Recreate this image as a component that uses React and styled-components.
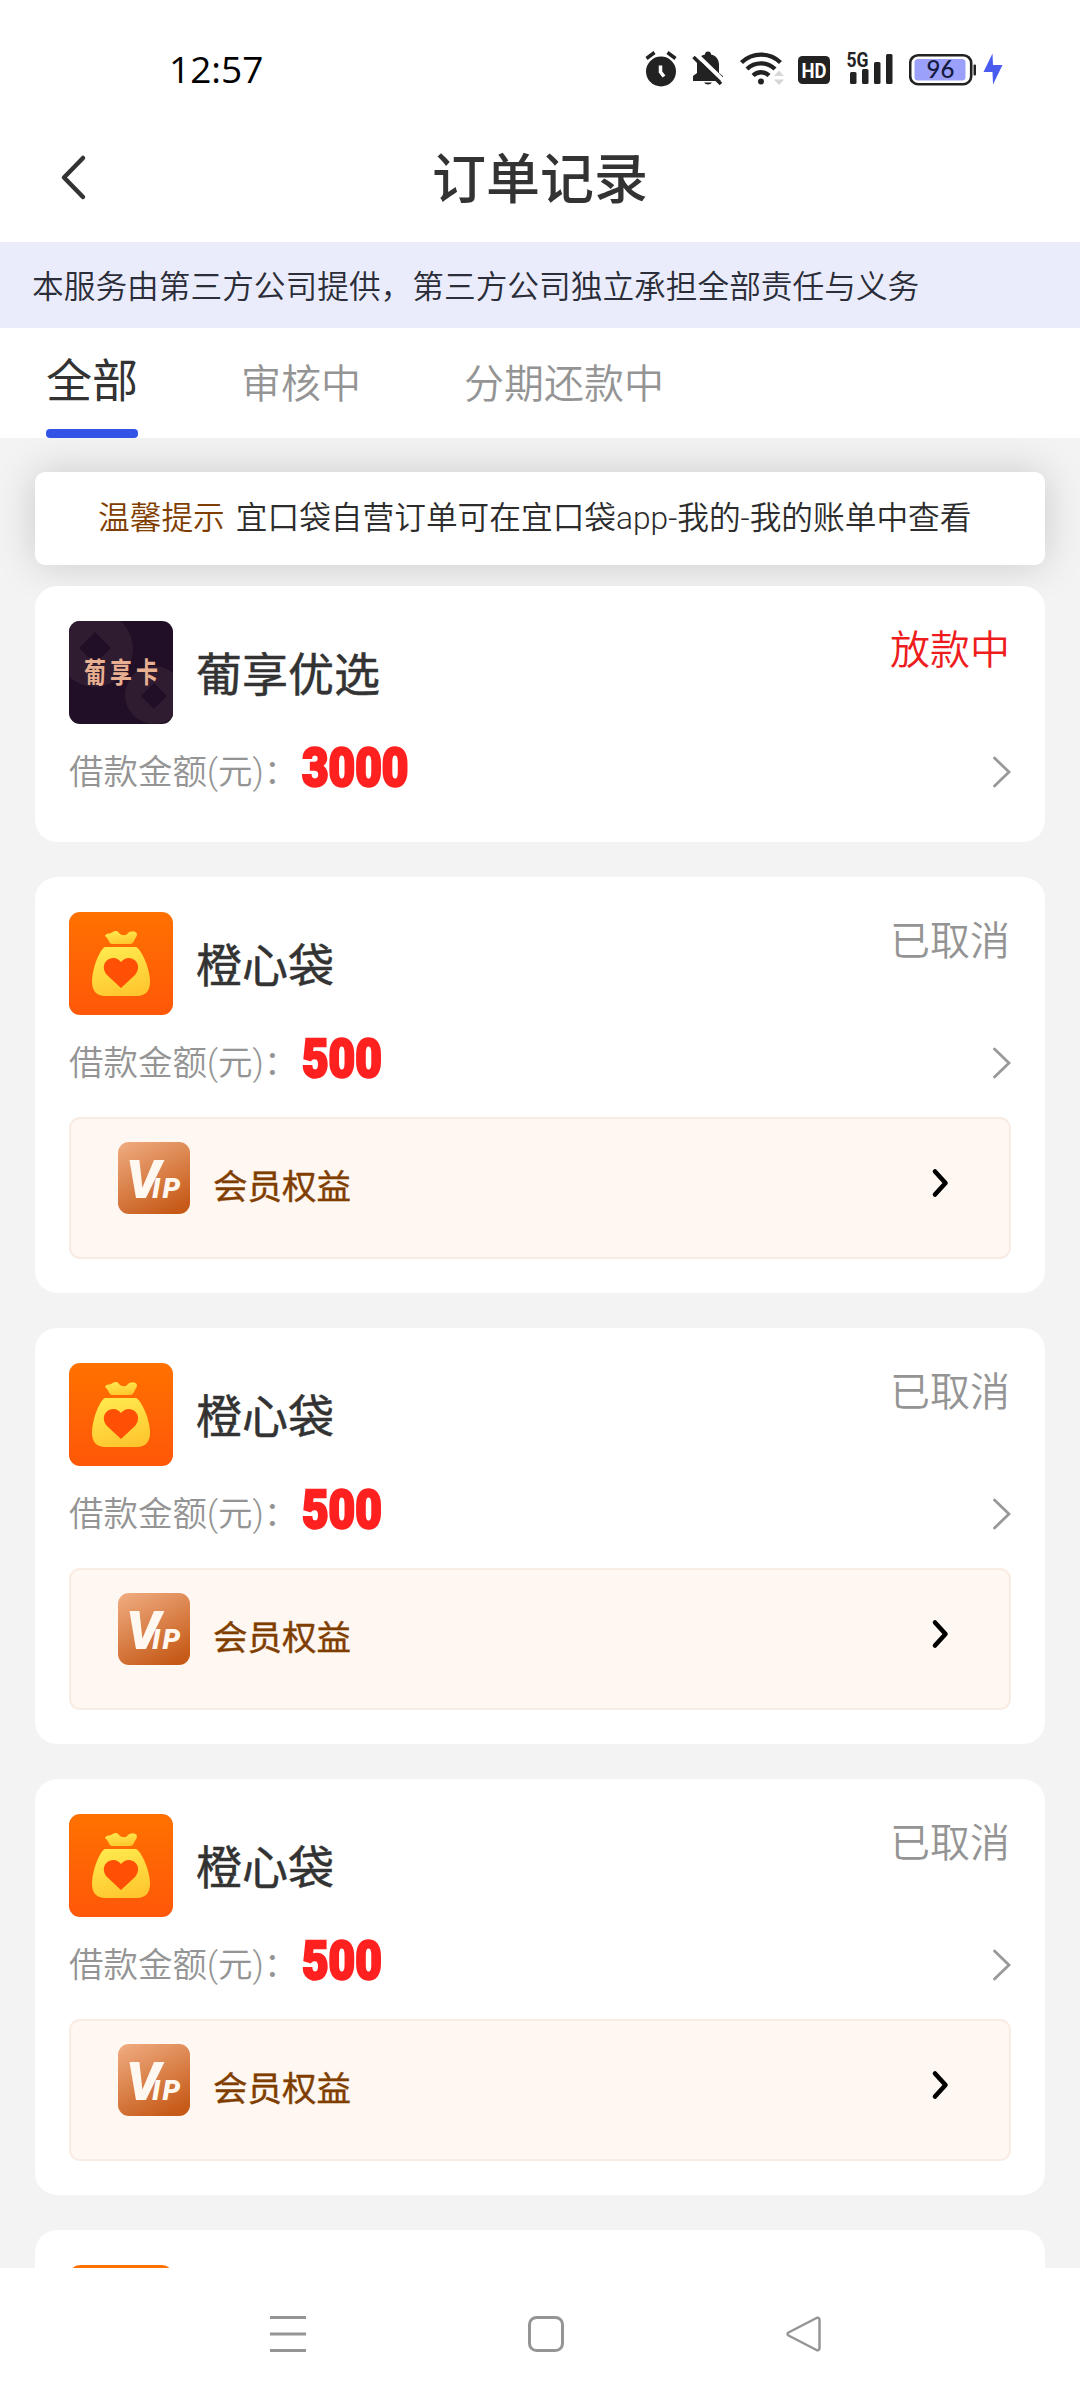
import React from "react";
import styled, { createGlobalStyle, css } from "styled-components";

const GlobalStyle = createGlobalStyle`
  * {
    box-sizing: border-box;
  }
  body {
    margin: 0;
    background: #fff;
    font-family: Roboto, "Noto Sans CJK SC", sans-serif;
    color: #333;
  }
`;

const flex = (direction = "row", align = "center", justify = "flex-start") => css`
  display: flex;
  flex-direction: ${direction};
  align-items: ${align};
  justify-content: ${justify};
`;

const Screen = styled.div`
  ${flex("column", "stretch")};
  width: 1080px;
  height: 2400px;
  overflow: hidden;
`;

const StatusBar = styled.header`
  ${flex("row", "center", "space-between")};
  height: 114px;
  padding: 24px 76px 0 169px;
`;

const Clock = styled.time`
  font: 500 37px/40px "Open Sans", sans-serif;
  color: #000;
`;

const StatusIcons = styled.div`
  ${flex()};
  svg {
    display: block;
  }
`;

const StatusSlot = styled.span`
  width: ${(props) => props.$width}px;
`;

const TitleBar = styled.div`
  display: grid;
  grid-template-columns: 200px 1fr 200px;
  align-items: center;
  height: 128px;
`;

const BackButton = styled.button`
  width: 60px;
  height: 60px;
  margin: 0 0 3px 44px;
  padding: 0;
  border: 0;
  background: none;
`;

const Title = styled.h1`
  margin: 0;
  padding-top: 6px;
  text-align: center;
  font-size: 54px;
  line-height: 64px;
  font-weight: 500;
`;

const Disclaimer = styled.p`
  margin: 0;
  height: 86px;
  padding: 0 32px;
  background: #eaecfb;
  font-size: 31.7px;
  line-height: 91px;
  font-weight: 350;
  color: #2b2d38;
`;

const Tabs = styled.nav`
  ${flex("row", "stretch")};
  gap: 103px;
  height: 110px;
  padding: 0 46px;
`;

const Tab = styled.span`
  ${flex("column", "center", "space-between")};
  font-size: ${(props) => (props.$active ? 46 : 40)}px;
  line-height: 101px;
  padding-top: ${(props) => (props.$active ? 3 : 6)}px;
  font-weight: ${(props) => (props.$active ? 400 : 350)};
  color: ${(props) => (props.$active ? "#333" : "#949494")};
  &::after {
    content: "";
    flex: none;
    width: 100%;
    height: 9px;
    margin-top: -3px;
    border-radius: 4px;
    background: ${(props) => (props.$active ? "#3253e6" : "transparent")};
  }
`;

const Content = styled.main`
  ${flex("column", "stretch")};
  height: 1830px;
  padding: 34px 35px 0;
  background: #f3f3f3;
  overflow: hidden;
`;

const Tip = styled.p`
  flex: none;
  margin: 0 0 21px;
  height: 93px;
  padding-left: 63px;
  border-radius: 10px;
  background: #fff;
  box-shadow: 0 0 40px rgba(0, 0, 0, 0.17);
  font-size: 31.7px;
  line-height: 93px;
  font-weight: 350;
  color: #2c2c2c;
  white-space: nowrap;
`;

const TipLabel = styled.span`
  margin-right: 11px;
  color: #7f3e00;
`;

const OrderList = styled.div`
  ${flex("column", "stretch")};
  flex: none;
  gap: 35px;
  position: relative;
`;

const Card = styled.article`
  padding: 35px 34px 26px;
  border-radius: 22px;
  background: #fff;
`;

const CardHead = styled.div`
  ${flex("row", "flex-start")};
  height: 103px;
`;

const Logo = styled.svg`
  display: block;
  width: 104px;
  height: 103px;
  border-radius: 11px;
`;

const Name = styled.h2`
  flex: 1;
  margin: 0 0 0 23px;
  font-size: 46px;
  line-height: 109px;
  font-weight: 400;
  -webkit-text-stroke: 0.5px #333;
`;

const Status = styled.span`
  margin-right: 1px;
  font-size: 40px;
  line-height: 59px;
  font-weight: 350;
  color: ${(props) => (props.$active ? "#ee1c1c" : "#949494")};
`;

const AmountRow = styled.div`
  ${flex("row", "center", "space-between")};
  height: 84px;
  margin-top: 8px;
  padding-bottom: 4px;
  font-size: 34.5px;
  font-weight: 350;
  color: #949494;
`;

const AmountLabel = styled.span`
  ${flex()};
  line-height: 80px;
`;

const Amount = styled.strong`
  margin: -9px 0 0 4px;
  transform: scaleX(0.85);
  transform-origin: left;
  font-size: 54px;
  font-weight: 900;
  color: #ff2020;
  -webkit-text-stroke: 2.5px #ff2020;
`;

const Benefits = styled.div`
  ${flex("row", "flex-start")};
  height: 142px;
  margin: 10px 0 8px;
  padding: 23px 60px 0 47px;
  border: 2px solid #f8ece4;
  border-radius: 11px;
  background: #fff7f1;
`;

const VipBadge = styled.svg`
  display: block;
  width: 72px;
  height: 72px;
  border-radius: 11px;
`;

const BenefitsText = styled.span`
  flex: 1;
  margin-left: 23px;
  font-size: 34.5px;
  line-height: 90px;
  color: #7f3e00;
  -webkit-text-stroke: 0.4px #7f3e00;
`;

const BenefitsArrow = styled.span`
  ${flex()};
  height: 82px;
`;

const SystemNav = styled.footer`
  ${flex("row", "center", "center")};
  gap: 218px;
  height: 132px;
  padding-left: 12px;
  background: #fff;
`;

const AlarmIcon = () => (
  <svg width="32" height="36" viewBox="0 0 32 36">
    <circle cx="16" cy="20.5" r="15" fill="#222" />
    <path d="M1.500 7.500 9.500 1.500M30.500 7.500 22.500 1.500" stroke="#222" strokeWidth="3.500" />
    <path d="M15.500 14.500v6.500l3.500 4.500" fill="none" stroke="#fff" strokeWidth="3.500" />
  </svg>
);

const MutedIcon = () => (
  <svg width="32" height="36" viewBox="0 0 32 36">
    <path
      fill="#222"
      d="M13 3.500a3 3 0 0 1 6 0c5 1 8 5 8 10v8.500l4 3v5H1v-5l4-3v-8.500c0-5 3-9 8-10z"
    />
    <path d="M12 31.500h8a4.500 3.500 0 0 1-8 0z" fill="#222" />
    <path d="M4 3 33 31" stroke="#fff" strokeWidth="4" />
    <path d="M1 4 8 11" stroke="#fff" strokeWidth="3" />
    <path d="M1.500 6 29 33" stroke="#222" strokeWidth="3.500" />
  </svg>
);

const WifiIcon = () => (
  <svg width="46" height="36" viewBox="0 0 46 36">
    <g fill="none" stroke="#222" strokeWidth="4.300">
      <path d="M1.500 11.500a28 28 0 0 1 39 0" />
      <path d="M7 18a20 20 0 0 1 28 0" />
      <path d="M13 24.500a11.500 11.500 0 0 1 16 0" />
    </g>
    <circle cx="21" cy="30.500" r="3" fill="#222" />
    <path d="M34 25l5-5.500 5 5.500zM34 28.500l5 5.500 5-5.500z" fill="#d6d6d6" />
  </svg>
);

const HdIcon = () => (
  <svg width="34" height="36" viewBox="0 0 34 36">
    <rect x="1" y="5" width="32" height="28" rx="4.500" fill="#222" />
    <text
      x="17"
      y="26.500"
      fill="#fff"
      fontSize="21"
      fontWeight="700"
      fontFamily="Roboto"
      textAnchor="middle"
      textLength="25"
      lengthAdjust="spacingAndGlyphs"
    >
      HD
    </text>
  </svg>
);

const SignalIcon = () => (
  <svg width="48" height="36" viewBox="0 0 48 36" overflow="visible">
    <g fill="#222">
      <rect x="4" y="21" width="6.500" height="12" rx="1.500" />
      <rect x="16" y="18" width="6.500" height="15" rx="1.500" />
      <rect x="28" y="11" width="6.500" height="22" rx="1.500" />
      <rect x="40" y="3" width="6.500" height="30" rx="1.500" />
      <text
        x="0.500"
        y="16"
        fontSize="20"
        fontWeight="700"
        fontFamily="Roboto"
        textLength="22"
        lengthAdjust="spacingAndGlyphs"
      >
        5G
      </text>
    </g>
  </svg>
);

const BatteryIcon = () => (
  <svg width="68" height="36" viewBox="0 0 68 36">
    <rect x="1.200" y="4.200" width="61" height="29" rx="8" fill="#fff" stroke="#222" strokeWidth="2.600" />
    <rect x="5.500" y="8" width="51" height="21.500" rx="3.500" fill="#9ba0fa" />
    <rect x="64.500" y="13.500" width="2.500" height="11" rx="1" fill="#222" />
    <text x="31.500" y="27" fontSize="24" fontFamily="Lato" fontWeight="500" textAnchor="middle" fill="#141a40">
      96
    </text>
  </svg>
);

const BoltIcon = () => (
  <svg width="22" height="36" viewBox="0 0 22 36">
    <path d="M10.500 2.500 1.500 21h9l.5 12.500L20.500 14h-9.500z" fill="#4a5cf0" />
  </svg>
);

const BackIcon = () => (
  <svg width="60" height="60" viewBox="0 0 60 60">
    <path
      d="M39 11 20 30.500 39 50"
      fill="none"
      stroke="#333"
      strokeWidth="4.500"
      strokeLinecap="round"
      strokeLinejoin="round"
    />
  </svg>
);

const DetailArrow = () => (
  <svg width="18" height="32" viewBox="0 0 18 32">
    <path d="M1.500 2 16 16 1.500 30" fill="none" stroke="#999" strokeWidth="2.800" strokeLinecap="round" />
  </svg>
);

const BoldArrow = () => (
  <svg width="18" height="30" viewBox="0 0 18 30">
    <path
      d="M4 3.500 14.500 15 4 26.500"
      fill="none"
      stroke="#000"
      strokeWidth="4.600"
      strokeLinecap="round"
      strokeLinejoin="round"
    />
  </svg>
);

const GrapeLogo = () => (
  <Logo viewBox="0 0 104 103">
    <rect width="104" height="103" fill="#200f26" />
    <circle cx="26" cy="28" r="38" fill="#2f1c31" />
    <path d="M26 11 42 27 26 43 10 27z" fill="#200f26" />
    <circle cx="85" cy="74" r="29" fill="#2f1c31" />
    <path d="M85 62 98 75 85 88 72 75z" fill="#200f26" />
    <text
      transform="scale(1 1.3)"
      x="15 41 67"
      y="48"
      fill="#e8b090"
      fontFamily="Noto Sans CJK SC"
      fontWeight="700"
      fontSize="22"
    >
      葡享卡
    </text>
  </Logo>
);

const BagLogo = () => (
  <Logo viewBox="0 0 104 103">
    <defs>
      <linearGradient id="bagBg" x1="0" y1="0" x2="0" y2="1">
        <stop offset="0" stopColor="#ff7100" />
        <stop offset="1" stopColor="#ff5709" />
      </linearGradient>
      <linearGradient id="bagFill" x1="0.300" y1="0" x2="0.600" y2="1">
        <stop offset="0" stopColor="#ffe94d" />
        <stop offset="1" stopColor="#ffc62e" />
      </linearGradient>
    </defs>
    <rect width="104" height="103" fill="url(#bagBg)" />
    <path
      d="M36 24c1-3 4-2 6-3 3-2 6-3 8 0 3 3 7 3 9 0 2-2 8-3 9 1 0 3-2 4-3 7-1 2-2 3-4 3H43c-3 0-3-5-7-8z"
      fill="url(#bagFill)"
    />
    <path
      d="M36 35h31c5 2 14 21 14 35 0 9-5 14-13 14H36c-8 0-13-5-13-14 0-14 8-33 13-35z"
      fill="url(#bagFill)"
    />
    <path
      d="M52 76 38 63c-6-7-3-16 6-17 4 0 6 2 8 4 2-2 4-4 8-4 9 1 12 10 6 17z"
      fill="#ff5005"
    />
  </Logo>
);

const VipIcon = () => (
  <VipBadge viewBox="0 0 72 72">
    <defs>
      <linearGradient id="vipBg" x1="0.200" y1="0" x2="0.700" y2="1">
        <stop offset="0" stopColor="#eda77a" />
        <stop offset="1" stopColor="#c65a18" />
      </linearGradient>
    </defs>
    <rect width="72" height="72" fill="url(#vipBg)" />
    <text x="8" y="56" fill="#fff8f0" fontFamily="Roboto" fontWeight="900" fontStyle="italic" fontSize="54">
      V
      <tspan x="34 44.500" fontSize="28">
        IP
      </tspan>
    </text>
  </VipBadge>
);

const MenuIcon = () => (
  <svg width="40" height="40" viewBox="0 0 40 40">
    <path d="M2 3.500h36M2 20h36M2 36.500h36" stroke="#959595" strokeWidth="3" />
  </svg>
);

const HomeIcon = () => (
  <svg width="40" height="40" viewBox="0 0 40 40">
    <rect x="3.500" y="3.500" width="33" height="33" rx="7" fill="none" stroke="#959595" strokeWidth="3" />
  </svg>
);

const ReturnIcon = () => (
  <svg width="40" height="40" viewBox="0 0 40 40">
    <path
      d="M32.500 4 4.500 18.500q-2 1.500 0 3L32.500 36q3 1 3-2V6q0-3-3-2z"
      fill="none"
      stroke="#959595"
      strokeWidth="2.500"
      strokeLinejoin="round"
    />
  </svg>
);

const orders = [
  { id: 1, name: "葡享优选", status: "放款中", amount: 3000, active: true, logo: GrapeLogo },
  { id: 2, name: "橙心袋", status: "已取消", amount: 500, benefits: true, logo: BagLogo },
  { id: 3, name: "橙心袋", status: "已取消", amount: 500, benefits: true, logo: BagLogo },
  { id: 4, name: "橙心袋", status: "已取消", amount: 500, benefits: true, logo: BagLogo },
];

const tabs = ["全部", "审核中", "分期还款中"];

const Order = ({ name, status, amount, active, benefits, logo: OrderLogo }) => (
  <Card>
    <CardHead>
      <OrderLogo />
      <Name>{name}</Name>
      <Status $active={active}>{status}</Status>
    </CardHead>
    <AmountRow>
      <AmountLabel>
        借款金额(元)：<Amount>{amount}</Amount>
      </AmountLabel>
      <DetailArrow />
    </AmountRow>
    {benefits && (
      <Benefits>
        <VipIcon />
        <BenefitsText>会员权益</BenefitsText>
        <BenefitsArrow>
          <BoldArrow />
        </BenefitsArrow>
      </Benefits>
    )}
  </Card>
);

const App = () => (
  <>
    <GlobalStyle />
    <Screen>
      <StatusBar>
        <Clock>12:57</Clock>
        <StatusIcons>
          <StatusSlot $width={47}>
            <AlarmIcon />
          </StatusSlot>
          <StatusSlot $width={48}>
            <MutedIcon />
          </StatusSlot>
          <StatusSlot $width={57}>
            <WifiIcon />
          </StatusSlot>
          <StatusSlot $width={49}>
            <HdIcon />
          </StatusSlot>
          <StatusSlot $width={63}>
            <SignalIcon />
          </StatusSlot>
          <StatusSlot $width={73}>
            <BatteryIcon />
          </StatusSlot>
          <BoltIcon />
        </StatusIcons>
      </StatusBar>
      <TitleBar>
        <BackButton aria-label="返回">
          <BackIcon />
        </BackButton>
        <Title>订单记录</Title>
      </TitleBar>
      <Disclaimer>本服务由第三方公司提供，第三方公司独立承担全部责任与义务</Disclaimer>
      <Tabs>
        {tabs.map((tab, idx) => (
          <Tab key={tab} $active={idx === 0}>
            {tab}
          </Tab>
        ))}
      </Tabs>
      <Content>
        <Tip>
          <TipLabel>温馨提示</TipLabel>
          宜口袋自营订单可在宜口袋app-我的-我的账单中查看
        </Tip>
        <OrderList>
          {orders.map((order) => (
            <Order key={order.id} {...order} />
          ))}
          {/* next order, only its top edge is above the nav bar */}
          <Card>
            <CardHead>
              <BagLogo />
            </CardHead>
          </Card>
        </OrderList>
      </Content>
      <SystemNav>
        <MenuIcon />
        <HomeIcon />
        <ReturnIcon />
      </SystemNav>
    </Screen>
  </>
);

export default App;
